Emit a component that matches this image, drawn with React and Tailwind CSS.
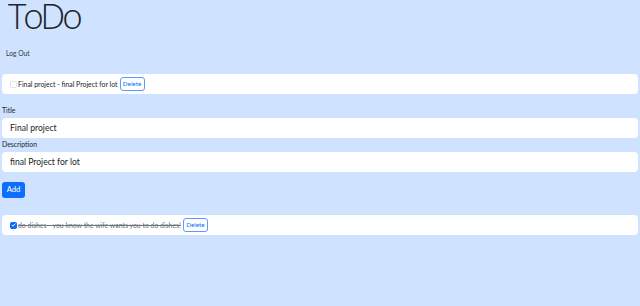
import React, { useState } from 'react';

const font = { fontFamily: 'Lato, "Noto Sans", sans-serif' };

const Check = ({ checked, onChange }) => (
  <button
    type="button"
    onClick={onChange}
    className={`flex items-center justify-center w-[7px] h-[7px] rounded-[1.5px] border shrink-0 ${
      checked ? 'bg-[#0d6efd] border-[#0d6efd]' : 'bg-white border-[#dee2e6]'
    }`}
  >
    {checked && (
      <svg viewBox="0 0 16 16" className="w-[6px] h-[6px]" fill="none" stroke="white" strokeWidth="3" strokeLinecap="round" strokeLinejoin="round">
        <path d="M3 8.5l3.2 3.2L13 4.5" />
      </svg>
    )}
  </button>
);

const TodoRow = ({ todo, onToggle, onDelete }) => (
  <div className="flex items-center bg-white rounded-[4px] h-[20px] px-[8px]">
    <Check checked={todo.done} onChange={onToggle} />
    <span
      className={`ml-[1px] text-[6.9px] ${
        todo.done ? 'line-through text-[#6c757d]' : 'text-[#212529]'
      }`}
    >
      {todo.title} - {todo.description}
    </span>
    <button
      onClick={onDelete}
      className="ml-[2px] h-[14px] w-[25px] text-[6.3px] leading-none text-[#0d6efd] border border-[#5b9bfd] rounded-[3px] bg-white"
    >
      Delete
    </button>
  </div>
);

export default function App() {
  const [todos, setTodos] = useState([
    { id: 1, title: 'Final project', description: 'final Project for lot', done: false },
  ]);
  const [done, setDone] = useState([
    {
      id: 2,
      title: 'do dishes',
      description: 'you know the wife wants you to do dishes!',
      done: true,
    },
  ]);
  const [title, setTitle] = useState('Final project');
  const [description, setDescription] = useState('final Project for lot');

  return (
    <div className="min-h-[306px] w-full bg-[#cfe2ff] px-[2px] text-[#212529]" style={font}>
      <h1
        className="pl-[6px] text-[35px] font-light leading-[32px] h-[38px] tracking-[-0.09em]"
        style={{ fontFamily: '"Open Sans", sans-serif' }}
      >
        ToDo
      </h1>
      <button className="ml-[4px] mt-[3px] h-[14px] text-[6.7px] text-[#343a40]">Log Out</button>

      <div className="mt-[12px] flex flex-col gap-[2px]">
        {todos.map((t) => (
          <TodoRow
            key={t.id}
            todo={t}
            onToggle={() => setTodos(todos.map((x) => (x.id === t.id ? { ...x, done: !x.done } : x)))}
            onDelete={() => setTodos(todos.filter((x) => x.id !== t.id))}
          />
        ))}
      </div>

      <form className="mt-[8px]" onSubmit={(e) => e.preventDefault()}>
        <label className="block text-[6.9px] leading-[17px] h-[16px]">Title</label>
        <input
          value={title}
          onChange={(e) => setTitle(e.target.value)}
          className="block w-full h-[20px] rounded-[4px] bg-white px-[8px] text-[8.6px] outline-none"
        />
        <label className="block text-[6.9px] leading-[13px] h-[14px]">Description</label>
        <input
          value={description}
          onChange={(e) => setDescription(e.target.value)}
          className="block w-full h-[20px] rounded-[4px] bg-white px-[8px] text-[8.6px] outline-none"
        />
        <button className="mt-[10px] h-[16px] w-[23px] rounded-[3px] bg-[#0d6efd] text-white text-[7.7px] leading-none">
          Add
        </button>
      </form>

      <div className="mt-[17px] flex flex-col gap-[2px]">
        {done.map((t) => (
          <TodoRow
            key={t.id}
            todo={t}
            onToggle={() => setDone(done.map((x) => (x.id === t.id ? { ...x, done: !x.done } : x)))}
            onDelete={() => setDone(done.filter((x) => x.id !== t.id))}
          />
        ))}
      </div>
    </div>
  );
}
